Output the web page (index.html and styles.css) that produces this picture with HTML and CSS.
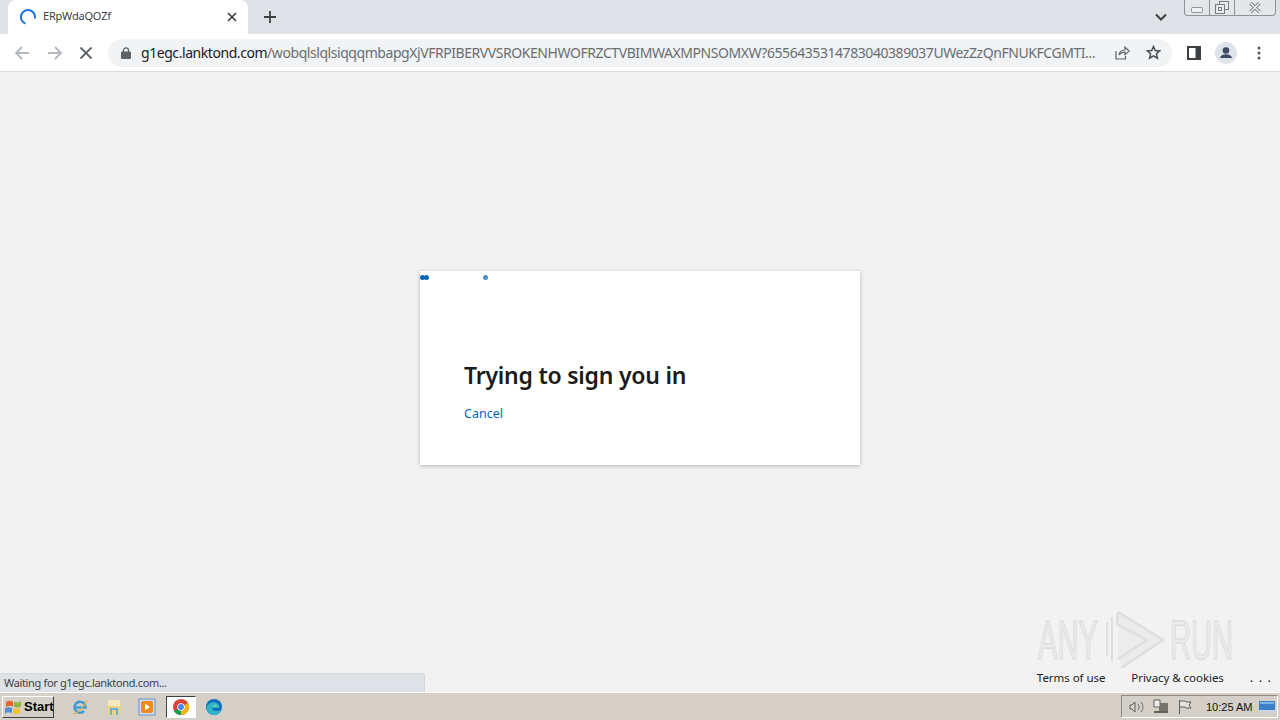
FILE: index.html
```html
<!DOCTYPE html>
<html lang="en">
<head>
<meta charset="utf-8">
<title>ERpWdaQOZf</title>
<link rel="stylesheet" href="styles.css">
</head>
<body>
<header class="tabstrip">
  <div class="tab">
    <svg class="spinner" width="16" height="16" viewBox="0 0 16 16"><path d="M5.500 14.600A7 7 0 1 1 14.800 9.500" fill="none" stroke="#1a73e8" stroke-width="2"/></svg>
    <span class="tab-title">ERpWdaQOZf</span>
    <svg class="tab-close" width="10" height="10" viewBox="0 0 10 10"><path d="M1 1l8 8M9 1l-8 8" stroke="#3c4043" stroke-width="1.700"/></svg>
  </div>
  <svg class="new-tab" width="12" height="12" viewBox="0 0 12 12"><path d="M6 0v12M0 6h12" stroke="#3c4043" stroke-width="1.800"/></svg>
  <div class="strip-end">
    <svg class="tab-search" width="12" height="8" viewBox="0 0 12 8"><path d="M1 1.500l5 5 5-5" fill="none" stroke="#3c4043" stroke-width="2"/></svg>
    <div class="winctl">
      <div class="win-btn win-min"><svg width="12" height="6" viewBox="0 0 12 6"><rect x="0.500" y="0.500" width="11" height="5" rx="1" fill="#eef0f2" stroke="#8d9298"/></svg></div>
      <div class="win-btn win-max"><svg width="14" height="13" viewBox="0 0 14 13"><rect x="4.500" y="0.500" width="9" height="8" fill="#e8eaed" stroke="#777c82"/><rect x="0.500" y="3.500" width="9" height="9" fill="#e8eaed" stroke="#777c82"/><rect x="3.500" y="6.500" width="3" height="3" fill="none" stroke="#777c82"/></svg></div>
      <div class="win-btn win-close"><svg width="12" height="11" viewBox="0 0 12 11"><path d="M1.500 1l9 9M10.500 1l-9 9" stroke="#777c82" stroke-width="3.200"/><path d="M1.500 1l9 9M10.500 1l-9 9" fill="none" stroke="#f4f5f6" stroke-width="1.400"/></svg></div>
    </div>
  </div>
</header>

<nav class="toolbar">
  <svg class="nav-icon first" width="16" height="14" viewBox="0 0 16 14"><path d="M15 7H2M8 1L2 7l6 6" fill="none" stroke="#b4b7bb" stroke-width="1.800"/></svg>
  <svg class="nav-icon" width="16" height="14" viewBox="0 0 16 14"><path d="M1 7h13M8 1l6 6-6 6" fill="none" stroke="#b4b7bb" stroke-width="1.800"/></svg>
  <svg class="nav-icon reload" width="14" height="14" viewBox="0 0 14 14"><path d="M1.500 1.500l11 11M12.500 1.500l-11 11" stroke="#5f6368" stroke-width="1.800"/></svg>
  <div class="omnibox">
    <svg class="lock" width="10" height="12" viewBox="0 0 10 12"><path d="M2.500 5V3.400a2.500 2.500 0 0 1 5 0V5" fill="none" stroke="#5f6368" stroke-width="1.300"/><rect y="4.600" width="10" height="7.400" rx="1" fill="#5f6368"/></svg>
    <div class="url"><span class="host">g1egc.lanktond.com</span><span class="path">/wobqlslqlsiqqqmbapgXjVFRPIBERVVSROKENHWOFRZCTVBIMWAXMPNSOMXW?6556435314783040389037UWezZzQnFNUKFCGMTI...</span></div>
    <svg class="share" width="15" height="15" viewBox="0 0 15 15"><path d="M1 6v8h9.500v-3" fill="none" stroke="#5f6368" stroke-width="1.200"/><path d="M4 10c.5-3.500 3-5 6-5V2.200L14.200 6 10 9.600V7.200C7.500 7 5.500 8 4 10z" fill="none" stroke="#5f6368" stroke-width="1.200"/></svg>
    <svg class="star" width="15" height="15" viewBox="0 0 15 15"><path d="M7.500 1.500l1.800 4 4.300.4-3.200 2.900 1 4.300-3.900-2.300-3.900 2.300 1-4.300L1.400 5.900l4.300-.4z" fill="none" stroke="#4a4d51" stroke-width="1.500"/></svg>
  </div>
  <svg class="panel" width="14" height="14" viewBox="0 0 14 14"><path d="M0 0h14v14H0z" fill="#3c4043"/><rect x="2" y="2" width="6.500" height="10" fill="#fff"/></svg>
  <div class="avatar"><svg width="22" height="22" viewBox="0 0 22 22"><circle cx="11" cy="11" r="11" fill="#dfe3ea"/><circle cx="11" cy="8.500" r="3.300" fill="#3c4a66"/><path d="M4.800 16c1-2.800 3.500-3.700 6.200-3.700s5.200.9 6.200 3.700z" fill="#3c4a66"/></svg></div>
  <svg class="menu" width="4" height="14" viewBox="0 0 4 14"><circle cx="2" cy="2" r="1.500" fill="#55585c"/><circle cx="2" cy="7" r="1.500" fill="#55585c"/><circle cx="2" cy="12" r="1.500" fill="#55585c"/></svg>
</nav>

<main class="page">
  <div class="center">
    <section class="card">
      <div class="dots"><span class="dot dot-a"></span><span class="dot dot-b"></span><span class="dot dot-c"></span></div>
      <h1 class="title">Trying to sign you in</h1>
      <a class="cancel" href="#">Cancel</a>
    </section>
  </div>
  <footer class="foot">
    <a href="#">Terms of use</a>
    <a href="#">Privacy &amp; cookies</a>
    <a class="more" href="#">. . .</a>
  </footer>
  <div class="watermark">
    <span class="wm-text">ANY</span>
    <svg class="wm-logo" width="60" height="60" viewBox="0 0 60 60"><path d="M2 12v34M7 7v44" fill="none" stroke="#dedede" stroke-width="2"/><path d="M13 2l45 28-42 28M13 2l-1 12 30 16-29 19" fill="#ececec" stroke="#dedede" stroke-width="2.500"/></svg>
    <span class="wm-text">RUN</span>
  </div>
  <div class="status">Waiting for g1egc.lanktond.com...</div>
</main>

<footer class="taskbar">
  <button class="start"><svg width="17" height="15" viewBox="0 0 17 15"><path d="M1 3c2.500-1.500 4.500-1.500 7-.5v5C5.500 6.500 3.500 6.500 1 8z" fill="#e8622a"/><path d="M9 2.800c2.500 1 4.500 1 7-.5v5c-2.500 1.500-4.500 1.500-7 .5z" fill="#8bb83a"/><path d="M0 9.500c2.500-1.500 4.500-1.500 7-.5v5c-2.500-1-4.500-1-7 .5z" fill="#4a90d9"/><path d="M8 9.300c2.500 1 4.500 1 7-.5v5c-2.500 1.500-4.500 1.500-7 .5z" fill="#f2c230"/></svg><span>Start</span></button>
  <div class="quick">
    <svg width="18" height="18" viewBox="0 0 18 18"><path d="M3.500 9.500h11A5.500 5.500 0 1 0 13 13" fill="none" stroke="#3f9ad6" stroke-width="2.600"/><path d="M2 15.500c3 1 10-5 14-13" fill="none" stroke="#e3b23c" stroke-width="1.200"/></svg>
    <svg width="18" height="18" viewBox="0 0 18 18"><path d="M2 6h14v11H2z" fill="#e7d28e"/><path d="M3 2h12v6H3z" fill="#f4e9bd"/><path d="M5 17v-7h8v7h-2v-5H7v5z" fill="#6db0d6"/></svg>
    <svg width="18" height="18" viewBox="0 0 18 18"><rect x="1" y="1" width="16" height="16" fill="#cfdff0" stroke="#6a93c4"/><rect x="3" y="3" width="12" height="12" rx="2" fill="#f08a1d"/><path d="M7 5.500l5 3.500-5 3.500z" fill="#fff"/></svg>
    <div class="chrome-btn"><svg width="16" height="16" viewBox="0 0 16 16"><circle cx="8" cy="8" r="8" fill="#db4437"/><path d="M8 8L1.100 12A8 8 0 0 0 8 16z" fill="#0f9d58"/><path d="M8 8v8a8 8 0 0 0 8-8 8 8 0 0 0-1-4z" fill="#f4b400"/><circle cx="8" cy="8" r="3.800" fill="#fff"/><circle cx="8" cy="8" r="2.900" fill="#4285f4"/></svg></div>
    <svg width="18" height="18" viewBox="0 0 18 18"><circle cx="9" cy="9" r="8" fill="#0f6cbd"/><path d="M1.500 10C3 4 10 3 13 6c2 2 1.500 4 1.500 4H7c.3 3 5 4 9 2-1 3-4 5-7 5-4 0-7-3-7.500-7z" fill="#2fb4c8"/><path d="M8 7.500c2-1.500 4-.5 4.500.8H8z" fill="#7fdc84"/></svg>
  </div>
  <div class="tray">
    <svg width="16" height="14" viewBox="0 0 16 14"><path d="M1 5h2l3-3v10L3 9H1z" fill="#d8d4cc" stroke="#5e5b55"/><path d="M9 4c1.500 2 1.500 4 0 6M12 2c2.500 3 2.500 7 0 10" fill="none" stroke="#6e6b64"/></svg>
    <svg width="16" height="15" viewBox="0 0 16 15"><rect x="6" y="4" width="9" height="9" fill="#77746d"/><path d="M1 1h6v7H1z" fill="#eee" stroke="#66635c"/><path d="M1 13h14" stroke="#66635c" stroke-width="2"/></svg>
    <svg class="flag" width="15" height="15" viewBox="0 0 15 15"><path d="M1.500 1v14M2 2h5l1 1h5l-2 3 2 3H8L7 8H2" fill="#e8e5de" stroke="#5e5b55"/></svg>
    <span class="clock">10:25 AM</span>
    <svg class="desk" width="16" height="12" viewBox="0 0 16 12"><rect width="16" height="12" fill="#3d7fc6"/><rect y="9" width="16" height="3" fill="#c9d4dc"/><rect x="1" y="1" width="14" height="2" fill="#7db4e4"/></svg>
  </div>
</footer>
</body>
</html>
```
FILE: styles.css
```css
* { box-sizing: border-box; }
html, body { margin: 0; height: 100%; }
body {
  width: 1280px;
  height: 720px;
  overflow: hidden;
  display: flex;
  flex-direction: column;
  font-family: "Noto Sans", "Open Sans", sans-serif;
  background: #f2f2f2;
}
svg { display: block; flex: none; }

.tabstrip {
  height: 34px;
  flex: none;
  background: #dee1e6;
  display: flex;
  align-items: flex-end;
  padding-left: 8px;
}
.tab {
  width: 240px;
  height: 34px;
  background: #fff;
  border-radius: 8px 8px 0 0;
  display: flex;
  align-items: center;
  padding: 0 11px 0 12px;
}
.tab-title {
  margin-left: 7px;
  flex: 1;
  font-size: 11px;
  line-height: 14px;
  padding-bottom: 2px;
  color: #3c4043;
  letter-spacing: -0.2px;
}
.new-tab { margin: 0 0 11px 16px; }
.strip-end {
  margin-left: auto;
  align-self: stretch;
  display: flex;
  align-items: flex-start;
  padding-right: 4px;
}
.tab-search { margin: 13px 17px 0 0; }
.winctl {
  width: 92px;
  height: 16px;
  display: flex;
  border: 1px solid #8d9298;
  border-top: 0;
  border-radius: 0 0 4px 4px;
  background: #e4e6ea;
}
.win-btn { display: flex; align-items: center; justify-content: center; height: 15px; border-right: 1px solid #8d9298; }
.win-min { width: 25px; padding-top: 4px; }
.win-max { width: 25px; }
.win-close { flex: 1; border-right: 0; }

.toolbar {
  height: 38px;
  flex: none;
  background: #fff;
  border-bottom: 1px solid #dadce0;
  display: flex;
  align-items: center;
  padding-left: 14px;
}
.nav-icon { margin-right: 16px; }
.nav-icon.first { margin-right: 17px; }
.nav-icon.reload { margin-right: 15px; }
.omnibox {
  width: 1064px;
  height: 28px;
  border-radius: 14px;
  background: #f1f3f4;
  display: flex;
  align-items: center;
  padding-left: 13px;
}
.lock { margin-right: 10px; }
.url {
  width: 960px;
  font-size: 14px;
  white-space: nowrap;
  overflow: hidden;
  letter-spacing: -0.44px;
}
.host { color: #202124; }
.path { color: #6a6e73; }
.share { margin-left: 14px; }
.star { margin-left: 16px; }
.panel { margin-left: 15px; }
.avatar { margin-left: 14px; }
.menu { margin-left: 20px; }

.page {
  position: relative;
  flex: 1;
  display: flex;
  flex-direction: column;
  background: #f2f2f2;
}
.center {
  flex: 1;
  display: flex;
  justify-content: center;
  padding-top: 199px;
}
.card {
  width: 440px;
  height: 194px;
  background: #fff;
  box-shadow: 0 1px 4px rgba(0, 0, 0, 0.25);
  padding: 0 44px;
  position: relative;
}
.dots { position: absolute; left: 0; top: 4px; width: 70px; height: 5px; }
.dot { position: absolute; top: 0; width: 5px; height: 5px; border-radius: 50%; background: #0067b8; }
.dot-a { left: 0; }
.dot-b { left: 4px; }
.dot-c { left: 63px; background: #4a90c8; }
.title {
  margin: 87px 0 0;
  font-size: 23px;
  line-height: 34px;
  font-weight: 600;
  color: #1b1b1b;
  letter-spacing: -0.24px;
}
.cancel {
  display: block;
  margin-top: 13px;
  font-size: 12.500px;
  line-height: 18px;
  color: #0067b8;
  text-decoration: none;
}
.foot {
  height: 28px;
  display: flex;
  justify-content: flex-end;
  align-items: flex-start;
  padding: 6px 8px 0 0;
  font-size: 11.500px;
  line-height: 16px;
}
.foot a { color: #1b1b1b; text-decoration: none; margin-left: 26px; letter-spacing: -0.05px; }
.foot .more { letter-spacing: 1px; font-size: 13px; margin-top: -1px; }
.watermark {
  position: absolute;
  left: 1038px;
  top: 538px;
  display: flex;
  align-items: center;
  height: 60px;
  gap: 5px;
}
.wm-text {
  font-family: "Liberation Sans", sans-serif;
  font-size: 55px;
  line-height: 42px;
  height: 42px;
  color: #ececec;
  -webkit-text-stroke: 1.500px #dedede;
  display: inline-block;
  width: 62px;
  transform: scaleX(0.53);
  transform-origin: left center;
  white-space: nowrap;
  overflow: visible;
}
.status {
  position: absolute;
  left: 0;
  bottom: 0;
  width: 425px;
  height: 19px;
  background: #dee1e6;
  border-top-right-radius: 3px;
  border: 1px solid #d4d7dc;
  border-left: 0;
  border-bottom: 0;
  padding-left: 4px;
  font-size: 11px;
  line-height: 17px;
  color: #3c4043;
  letter-spacing: -0.35px;
}

.taskbar {
  height: 28px;
  flex: none;
  background: #d4d0c8;
  border-top: 1px solid #fff;
  display: flex;
  align-items: center;
  padding-left: 2px;
}
.start {
  width: 52px;
  height: 22px;
  padding: 0 0 0 2px;
  display: flex;
  align-items: center;
  gap: 2px;
  background: #d4d0c8;
  border: 1px solid;
  border-color: #fff #404040 #404040 #fff;
  font-family: "Liberation Sans", sans-serif;
  font-size: 13px;
  font-weight: 700;
  color: #000;
}
.quick { display: flex; align-items: center; gap: 15.500px; margin-left: 17px; }
.chrome-btn {
  width: 30px;
  height: 22px;
  margin: 0 -6px;
  background: #fff;
  border: 1px solid;
  border-color: #404040 #fff #fff #404040;
  display: flex;
  align-items: center;
  justify-content: center;
}
.tray {
  margin-left: auto;
  margin-right: 2px;
  width: 157px;
  height: 23px;
  border: 1px solid;
  border-color: #8e8b84 #fff #fff #8e8b84;
  display: flex;
  align-items: center;
  padding-left: 7px;
  gap: 8px;
}
.flag { margin-left: 1px; }
.clock { margin-left: 5px; font-family: "Liberation Sans", sans-serif; font-size: 11px; color: #111; white-space: nowrap; }
.desk { margin-left: -1px; }
```
